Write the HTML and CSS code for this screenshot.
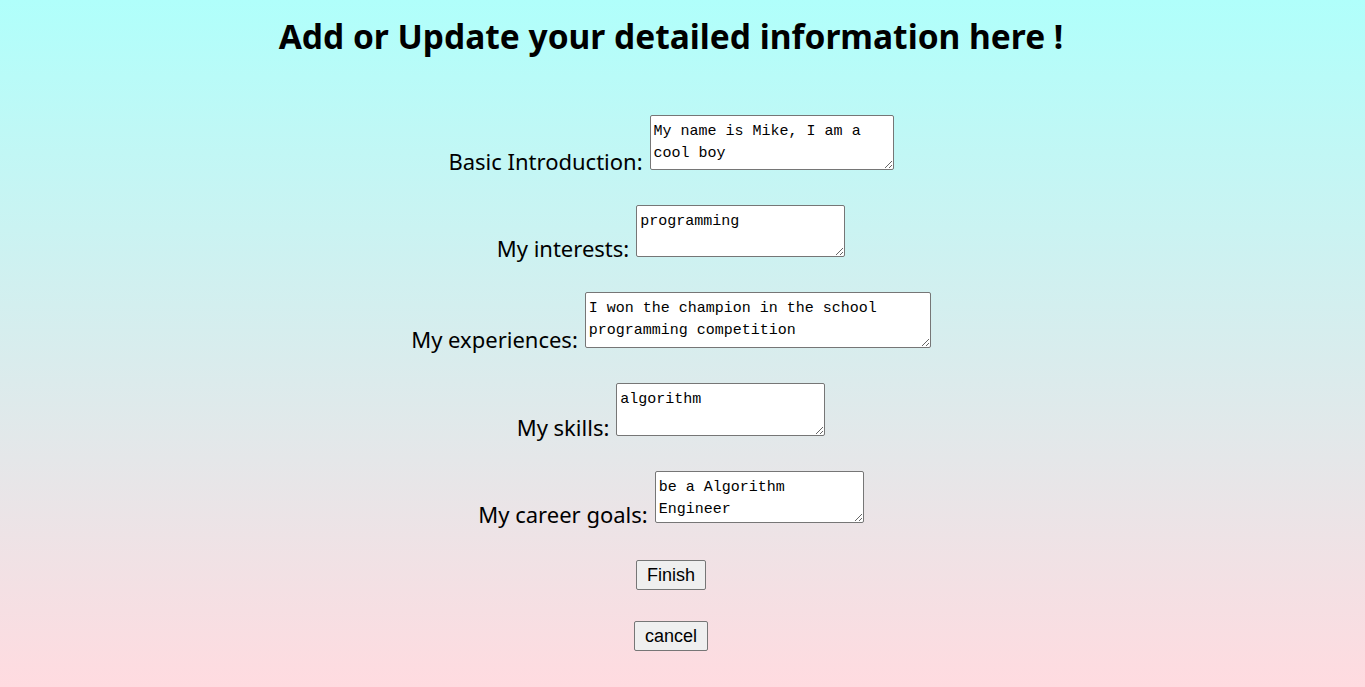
FILE: index.html
```html
<!DOCTYPE html>
<html>
<head>
<meta charset="utf-8">
<link rel="stylesheet" href="styles.css">
</head>
<body>
<h1 class="title">Add or Update your detailed information here !</h1>
<form class="form">
  <div class="row"><label class="label">Basic Introduction:</label> <textarea class="field f-intro">My name is Mike, I am a cool boy</textarea></div>
  <div class="row"><label class="label">My interests:</label> <textarea class="field f-std">programming</textarea></div>
  <div class="row"><label class="label">My experiences:</label> <textarea class="field f-exp">I won the champion in the school programming competition</textarea></div>
  <div class="row"><label class="label">My skills:</label> <textarea class="field f-std f-tall">algorithm</textarea></div>
  <div class="row"><label class="label">My career goals:</label> <textarea class="field f-std">be a Algorithm Engineer</textarea></div>
  <div class="btn-row"><button type="button" class="btn">Finish</button></div>
  <div class="btn-row"><button type="button" class="btn">cancel</button></div>
</form>
</body>
</html>
```
FILE: styles.css
```css
html {
  height: 100%;
}
body {
  margin: 0;
  padding-right: 23px;
  min-height: 100%;
  background: linear-gradient(to bottom, #b0fffb 0%, #ffdbe0 100%);
  font-family: "Noto Sans", "Open Sans", sans-serif;
  color: #000;
}
.title {
  margin: 0;
  padding-top: 13px;
  text-align: center;
  font-size: 33.5px;
  font-weight: bold;
  line-height: 47px;
}
.form {
  display: flex;
  flex-direction: column;
  align-items: center;
  padding-top: 55px;
}
.row {
  display: flex;
  align-items: flex-end;
  justify-content: center;
  margin-bottom: 35px;
}
.label {
  font-size: 22px;
  line-height: 22px;
  margin-right: 7px;
  position: relative;
  top: 2px;
}
.field {
  font-family: "Liberation Mono", monospace;
  font-size: 15px;
  line-height: 22px;
  padding: 5px 3px 0;
  border: 1px solid #767676;
  border-radius: 2px;
  background: #fff;
  color: #000;
  box-sizing: border-box;
  resize: both;
  margin: 0;
}
.f-intro { width: 244px; height: 55px; }
.f-std { width: 209px; height: 52px; }
.f-tall { height: 53px; }
.f-exp { width: 346px; height: 56px; }
.btn-row {
  margin-top: 2px;
  margin-bottom: 29px;
}
.btn {
  font-family: "Liberation Sans", Arial, sans-serif;
  font-size: 18px;
  padding: 3px 10px;
  height: 30px;
  background: #efefef;
  border: 1px solid #767676;
  border-radius: 2px;
  color: #000;
}
```
